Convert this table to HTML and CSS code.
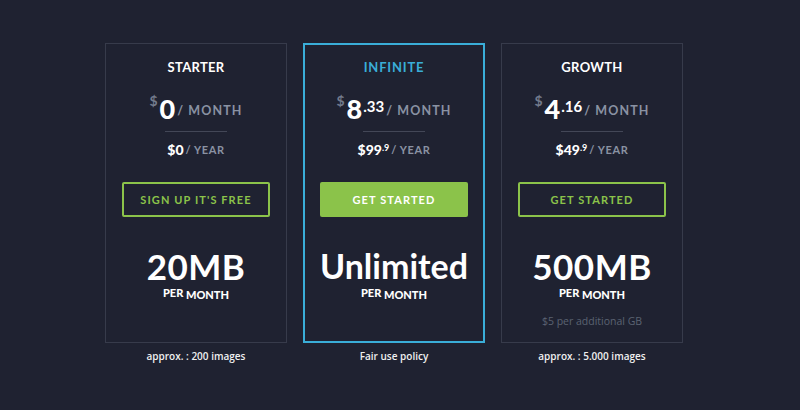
FILE: index.html
```html
<!DOCTYPE html>
<html>
<head>
<meta charset="utf-8">
<link rel="stylesheet" href="styles.css">
</head>
<body>
<div class="plans">
  <div class="plan">
    <div class="card">
      <div class="name">STARTER</div>
      <div class="price"><span class="cur">$</span><span class="big">0</span><span class="per">/ MONTH</span></div>
      <div class="divider"></div>
      <div class="year"><span class="ybig">$0</span><span class="per small">/ YEAR</span></div>
      <a class="btn outline">SIGN UP IT'S FREE</a>
      <div class="quota">20MB</div>
      <div class="permonth"><span class="pm1">PER</span> <span>MONTH</span></div>
    </div>
    <div class="note">approx. : 200 images</div>
  </div>
  <div class="plan">
    <div class="card featured">
      <div class="name cyan">INFINITE</div>
      <div class="price"><span class="cur">$</span><span class="big">8</span><span class="dec">.33</span><span class="per">/ MONTH</span></div>
      <div class="divider"></div>
      <div class="year"><span class="ybig">$99</span><span class="ysup">.9</span><span class="per small">/ YEAR</span></div>
      <a class="btn filled">GET STARTED</a>
      <div class="quota">Unlimited</div>
      <div class="permonth"><span class="pm1">PER</span> <span>MONTH</span></div>
    </div>
    <div class="note">Fair use policy</div>
  </div>
  <div class="plan">
    <div class="card">
      <div class="name">GROWTH</div>
      <div class="price"><span class="cur">$</span><span class="big">4</span><span class="dec">.16</span><span class="per">/ MONTH</span></div>
      <div class="divider"></div>
      <div class="year"><span class="ybig">$49</span><span class="ysup">.9</span><span class="per small">/ YEAR</span></div>
      <a class="btn outline">GET STARTED</a>
      <div class="quota">500MB</div>
      <div class="permonth"><span class="pm1">PER</span> <span>MONTH</span></div>
      <div class="extra">$5 per additional GB</div>
    </div>
    <div class="note">approx. : 5.000 images</div>
  </div>
</div>
</body>
</html>
```

FILE: styles.css
```css
html, body {
  margin: 0;
  padding: 0;
  background: #1f2231;
  width: 800px;
  height: 410px;
  overflow: hidden;
  font-family: Lato, "Open Sans", sans-serif;
  color: #ffffff;
}
.plans {
  display: flex;
  gap: 16px;
  padding: 43px 0 0 105px;
}
.plan {
  width: 182px;
  display: flex;
  flex-direction: column;
}
.card {
  box-sizing: border-box;
  height: 300px;
  border: 1px solid #373b4b;
  display: flex;
  flex-direction: column;
  align-items: center;
  padding-top: 15px;
}
.card.featured {
  border: 2px solid #3aaed8;
  padding-top: 14px;
}
.name {
  font-size: 13px;
  font-weight: 700;
  letter-spacing: 0.3px;
  line-height: 16px;
}
.name.cyan { color: #3aaed8; letter-spacing: 0.8px; }
.price {
  margin-top: 19px;
  display: flex;
  align-items: flex-start;
  height: 30px;
}
.cur {
  color: #737b8c;
  font-size: 14px;
  font-weight: 700;
  margin-top: -2px;
  margin-right: 2px;
}
.big {
  font-size: 27px;
  font-weight: 900;
  line-height: 30px;
}
.dec {
  font-size: 15px;
  font-weight: 700;
  margin-top: 3px;
  margin-left: 1px;
}
.per {
  color: #8a92a3;
  font-size: 12.5px;
  font-weight: 700;
  letter-spacing: 1.1px;
  margin-top: 9px;
  margin-left: 2px;
}
.divider {
  margin-top: 7px;
  width: 62px;
  height: 1px;
  background: #434757;
}
.year {
  margin-top: 8px;
  display: flex;
  align-items: flex-start;
  height: 20px;
}
.ybig {
  font-size: 14px;
  font-weight: 900;
  line-height: 18px;
  margin-top: 1px;
}
.ysup {
  font-size: 9px;
  font-weight: 700;
  margin-top: 2px;
}
.per.small {
  font-size: 11px;
  margin-top: 3px;
  letter-spacing: 0.6px;
}
.btn {
  box-sizing: border-box;
  margin-top: 22px;
  width: 148px;
  height: 35px;
  display: flex;
  align-items: center;
  justify-content: center;
  font-size: 11px;
  font-weight: 700;
  letter-spacing: 1.1px;
  border-radius: 2px;
}
.btn.outline {
  border: 2px solid #8bc34a;
  color: #8bc34a;
}
.btn.filled {
  background: #8bc34a;
  color: #ffffff;
}
.quota {
  margin-top: 29px;
  font-size: 35px;
  font-weight: 700;
  line-height: 40px;
  letter-spacing: 0.5px;
}
.featured .quota {
  font-size: 34px;
  letter-spacing: 0;
}
.permonth {
  margin-top: 2px;
  font-size: 11px;
  font-weight: 900;
  line-height: 14px;
}
.pm1 { position: relative; top: -2px; }
.extra {
  margin-top: 12px;
  font-family: "Open Sans", sans-serif;
  font-size: 10.5px;
  color: #5b6272;
}
.note {
  margin-top: 6px;
  text-align: center;
  font-family: "Open Sans", sans-serif;
  font-size: 10px;
  font-weight: 600;
  color: #f0f0f0;
}
```
